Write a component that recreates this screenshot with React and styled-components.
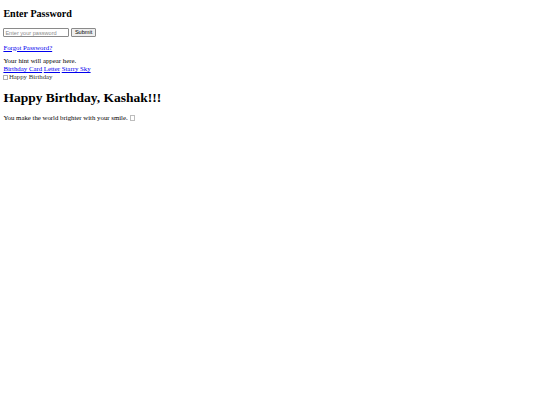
import React from "react";
import styled, { createGlobalStyle } from "styled-components";

const GlobalStyle = createGlobalStyle`
  html, body {
    margin: 0;
    padding: 0;
    background: #ffffff;
  }
  body {
    font-family: "Liberation Serif", "Times New Roman", serif;
    font-size: 6.8px;
    line-height: 8px;
    color: #000000;
  }
`;

const Page = styled.div`
  display: flex;
  flex-direction: column;
  align-items: flex-start;
  padding: 0 3.4px;
`;

const Title = styled.h2`
  font-size: 10.1px;
  font-weight: bold;
  line-height: 12px;
  margin: 8px 0 8px;
`;

const PasswordRow = styled.div`
  display: flex;
  align-items: center;
  gap: 2px;
`;

const PasswordInput = styled.input`
  box-sizing: border-box;
  width: 66px;
  height: 9px;
  padding: 0 1px;
  border: 0.6px solid #8a8a8a;
  border-radius: 1px;
  font-family: "Liberation Sans", Arial, sans-serif;
  font-size: 5.6px;
  &::placeholder {
    color: #8a8a8a;
  }
`;

const Button = styled.button`
  box-sizing: border-box;
  height: 9px;
  padding: 0 2.5px;
  border: 0.6px solid #8a8a8a;
  border-radius: 1px;
  background: #efefef;
  font-family: "Liberation Sans", Arial, sans-serif;
  font-size: 5.6px;
  line-height: 7px;
  color: #000000;
`;

const Link = styled.a`
  color: #0000ee;
  text-decoration: underline;
`;

const Para = styled.p`
  margin: ${(p) => p.$margin || "6.67px 0"};
`;

const Nav = styled.nav`
  display: flex;
  gap: 1.7px;
`;

const BrokenImage = styled.span`
  display: inline-flex;
  align-items: center;
  color: #333333;
  &::before {
    content: "";
    width: 3px;
    height: 3.5px;
    border: 0.6px solid #b0b0b0;
    margin-right: 0.5px;
  }
`;

const Heading = styled.h1`
  font-size: 13.5px;
  font-weight: bold;
  line-height: 16px;
  margin: 8.6px 0 8.5px;
`;

const Emoji = styled.span`
  display: inline-block;
  width: 2.5px;
  height: 4px;
  border: 0.6px solid #bdbdbd;
  margin-left: 2.5px;
  vertical-align: -0.5px;
`;

export default function App() {
  return (
    <Page>
      <GlobalStyle />
      <Title>Enter Password</Title>
      <PasswordRow>
        <PasswordInput type="password" placeholder="Enter your password" />
        <Button>Submit</Button>
      </PasswordRow>
      <Para $margin="6.5px 0 5.75px">
        <Link href="#">Forgot Password?</Link>
      </Para>
      <Para $margin="0">Your hint will appear here.</Para>
      <Nav>
        <Link href="#">Birthday Card</Link>
        <Link href="#">Letter</Link>
        <Link href="#">Starry Sky</Link>
      </Nav>
      <BrokenImage role="img" aria-label="Happy Birthday">Happy Birthday</BrokenImage>
      <Heading>Happy Birthday, Kashak!!!</Heading>
      <Para $margin="0">
        You make the world brighter with your smile.<Emoji aria-label="smile" />
      </Para>
    </Page>
  );
}
